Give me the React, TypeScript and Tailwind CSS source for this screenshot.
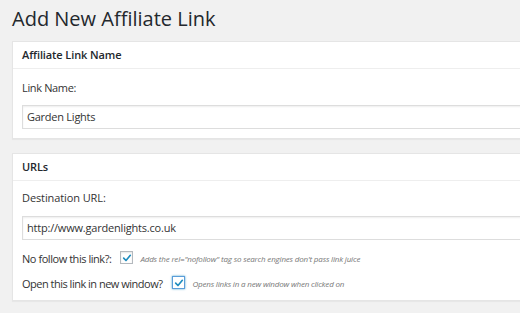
import React from "react";

function Check({ focus }: { focus?: boolean }) {
  return (
    <span
      className={
        "inline-flex items-center justify-center w-[13px] h-[13px] bg-white border " +
        (focus
          ? "border-[#5b9dd9] shadow-[0_0_2px_rgba(30,140,190,0.8)]"
          : "border-[#b4b9be] shadow-[inset_0_1px_2px_rgba(0,0,0,0.1)]")
      }
    >
      <svg width="10" height="10" viewBox="0 0 12 12">
        <path d="M2 6.2 L4.8 9 L10 2.8" fill="none" stroke="#1e8cbe" strokeWidth="2" strokeLinecap="round" strokeLinejoin="round" />
      </svg>
    </span>
  );
}

export default function App() {
  return (
    <div className="w-[520px] h-[313px] overflow-hidden bg-[#f1f1f1] text-[#23282d] [font-family:'Open_Sans',sans-serif]">
      <h1 className="pl-[12px] pt-[6px] h-[41px] text-[20px] leading-[26px] font-normal text-[#23282d]">
        Add New Affiliate Link
      </h1>
      <div className="ml-[12px] w-[600px] bg-white border border-[#e5e5e5] shadow-[0_1px_1px_rgba(0,0,0,0.04)]">
        <div className="h-[27px] flex items-center px-[9px] border-b border-[#eeeeee] text-[11px] font-semibold tracking-[-0.1px] text-[#23282d]">
          Affiliate Link Name
        </div>
        <div className="px-[9px] pt-[10px] pb-[9px]">
          <div className="text-[11px] leading-[17px] tracking-[-0.35px] text-[#333]">Link Name:</div>
          <div className="mt-[9px] h-[24px] border border-[#dddddd] shadow-[inset_0_1px_2px_rgba(0,0,0,0.07)] flex items-center px-[4px] text-[11px] tracking-[-0.25px] text-[#333]">
            Garden Lights
          </div>
        </div>
      </div>
      <div className="ml-[12px] mt-[14px] w-[600px] bg-white border border-[#e5e5e5] shadow-[0_1px_1px_rgba(0,0,0,0.04)]">
        <div className="h-[27px] flex items-center px-[9px] border-b border-[#eeeeee] text-[11px] font-semibold tracking-[-0.1px] text-[#23282d]">
          URLs
        </div>
        <div className="px-[9px] pt-[8px] pb-[7px]">
          <div className="text-[11px] leading-[17px] tracking-[-0.1px] text-[#333]">Destination URL:</div>
          <div className="mt-[10px] h-[24px] border border-[#dddddd] shadow-[inset_0_1px_2px_rgba(0,0,0,0.07)] flex items-center px-[4px] text-[11px] tracking-[-0.2px] text-[#333]">
            http://www.gardenlights.co.uk
          </div>
          <div className="mt-[10px] h-[18px] flex items-center text-[11px] tracking-[-0.45px] text-[#333]">
            <span>No follow this link?:</span>
            <span className="ml-[9px]"><Check /></span>
            <span className="ml-[7px] text-[8px] italic tracking-[-0.18px] text-[#777]">Adds the rel="nofollow" tag so search engines don't pass link juice</span>
          </div>
          <div className="mt-[7px] h-[18px] flex items-center text-[11px] tracking-[-0.5px] text-[#333]">
            <span>Open this link in new window?</span>
            <span className="ml-[10px]"><Check focus /></span>
            <span className="ml-[7px] text-[8px] italic tracking-[-0.18px] text-[#777]">Opens links in a new window when clicked on</span>
          </div>
        </div>
      </div>
    </div>
  );
}
